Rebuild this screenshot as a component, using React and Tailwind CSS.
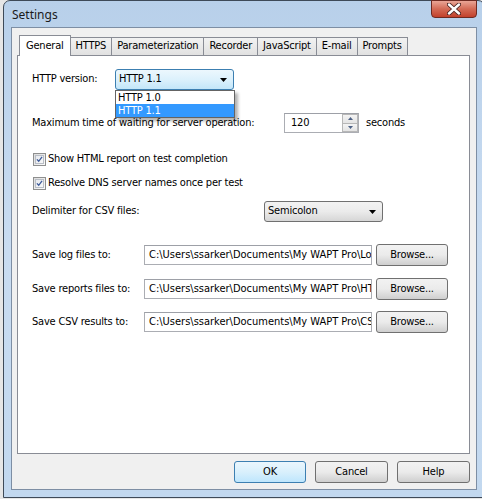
import React from "react";

const F = { fontFamily: '"DejaVu Sans Condensed", "DejaVu Sans", sans-serif' };

function Arrow() {
  return (
    <svg width="7" height="4" viewBox="0 0 7 4" className="block">
      <path d="M0 0 H7 L3.5 4 Z" fill="#000" />
    </svg>
  );
}

function Check() {
  return (
    <div className="w-[13px] h-[13px] border border-[#8e8f8f] bg-gradient-to-br from-[#dcdcdc] to-[#fbfbfb] flex items-center justify-center shrink-0">
      <div className="w-[9px] h-[9px] bg-gradient-to-br from-[#e6e9ee] to-[#f8f8f8] border border-[#b9bec6] flex items-center justify-center">
        <svg width="9" height="9" viewBox="0 0 9 9" className="block">
          <path d="M1.2 4.3 L3.5 6.8 L7.8 1.2" stroke="#3c5a99" strokeWidth="1.7" fill="none" />
        </svg>
      </div>
    </div>
  );
}

function Button({ children, w, def }) {
  return (
    <div
      className={`h-[22px] rounded-[3px] border flex items-center justify-center text-[11px] text-black ${
        def
          ? "border-[#3c7fb1] bg-gradient-to-b from-[#eaf6fd] via-[#d9f0fc] to-[#bee6fd]"
          : "border-[#707070] bg-gradient-to-b from-[#f2f2f2] via-[#ebebeb] to-[#cfcfcf]"
      }`}
      style={{ width: w }}
    >
      {children}
    </div>
  );
}

function PathRow({ label, value, mt }) {
  return (
    <div className={`flex items-center h-[22px] ${mt}`}>
      <span className="w-[112px] shrink-0">{label}</span>
      <div className="w-[228px] h-[20px] border border-[#abadb3] border-t-[#9da0a7] bg-white flex items-center pl-[4px] overflow-hidden whitespace-nowrap tracking-normal">
        {value}
      </div>
      <div className="ml-[4px]">
        <Button w="72px">Browse...</Button>
      </div>
    </div>
  );
}

export default function App() {
  return (
    <div className="w-[482px] h-[499px] overflow-hidden bg-[#e6e6e6] text-[11px] tracking-[-0.2px] text-black" style={F}>
      <div className="ml-[3px] w-[482px] h-[498px] rounded-t-[7px] border border-[#3e4a58] bg-gradient-to-b from-[#b8d0ea] via-[#c9dcf1] to-[#c2d8ef] flex flex-col px-[7px] pb-[7px]">
        {/* title bar */}
        <div className="h-[26px] flex items-start justify-between shrink-0">
          <span className="pt-[5px] pl-[1px] text-[12px] tracking-normal text-[#1a1a1a]" style={{ fontFamily: '"Noto Sans", sans-serif' }}>
            Settings
          </span>
          <div className="w-[46px] h-[18px] -mt-px rounded-b-[4px] border border-[#6e2a21] bg-gradient-to-b from-[#e9a596] via-[#d36a55] to-[#c2402b] flex items-center justify-center">
            <svg width="14" height="12" viewBox="0 0 14 12" className="block">
              <path d="M2 1.5 L12 10.5 M12 1.5 L2 10.5" stroke="#4a2320" strokeWidth="4.2" strokeLinecap="round" />
              <path d="M2 1.5 L12 10.5 M12 1.5 L2 10.5" stroke="#ffffff" strokeWidth="2.4" strokeLinecap="round" />
            </svg>
          </div>
        </div>
        {/* client area */}
        <div className="flex-1 border border-[#7d8ea4] bg-[#f0f0f0] flex flex-col px-[5px]">
          {/* tabs */}
          <div className="flex items-end h-[27px] pl-[2px] shrink-0">
            <div className="h-[21px] px-[6px] bg-white border border-b-0 border-[#898c95] flex items-center -mb-px relative z-10">
              General
            </div>
            {["HTTPS", "Parameterization", "Recorder", "JavaScript", "E-mail", "Prompts"].map((t) => (
              <div
                key={t}
                className="h-[18px] px-[5px] border border-l-0 border-b-0 border-[#898c95] bg-gradient-to-b from-[#f2f2f2] to-[#e1e1e1] flex items-center"
              >
                {t}
              </div>
            ))}
          </div>
          {/* panel */}
          <div className="w-[453px] h-[399px] bg-white border border-[#898c95] flex flex-col pl-[14px]">
            <div className="flex items-center h-[21px] mt-[13px]">
              <span className="w-[83px] shrink-0">HTTP version:</span>
              <div className="relative">
                <div className="w-[119px] h-[21px] rounded-[3px] border border-[#3c7fb1] bg-gradient-to-b from-[#ecf7fd] via-[#dcf1fc] to-[#c3e6f9] flex items-center justify-between pl-[3px] pr-[6px]">
                  <span>HTTP 1.1</span>
                  <Arrow />
                </div>
                <div className="absolute left-0 top-[21px] w-[120px] bg-white border border-[#646464] shadow-[3px_3px_3px_rgba(0,0,0,0.3)] z-20">
                  <div className="h-[13px] leading-[13px] pl-[2px]">HTTP 1.0</div>
                  <div className="h-[13px] leading-[13px] pl-[2px] bg-[#3399ff] text-white">HTTP 1.1</div>
                </div>
              </div>
            </div>

            <div className="flex items-center h-[20px] mt-[23px]">
              <span className="w-[252px] shrink-0">Maximum time of waiting for server operation:</span>
              <div className="w-[75px] h-[20px] border border-[#abadb3] border-t-[#9da0a7] bg-white flex items-center justify-between">
                <span className="pl-[6px]">120</span>
                <div className="w-[16px] h-[18px] flex flex-col">
                  <div className="flex-1 border border-[#b7b7b7] bg-gradient-to-b from-[#f4f4f4] to-[#e4e4e4] flex items-center justify-center">
                    <svg width="5" height="3" viewBox="0 0 5 3" className="block">
                      <path d="M0 3 H5 L2.5 0 Z" fill="#4d6185" />
                    </svg>
                  </div>
                  <div className="flex-1 border border-t-0 border-[#b7b7b7] bg-gradient-to-b from-[#f4f4f4] to-[#e4e4e4] flex items-center justify-center">
                    <svg width="5" height="3" viewBox="0 0 5 3" className="block">
                      <path d="M0 0 H5 L2.5 3 Z" fill="#4d6185" />
                    </svg>
                  </div>
                </div>
              </div>
              <span className="ml-[7px]">seconds</span>
            </div>

            <div className="flex items-center h-[16px] mt-[18px] pl-px gap-[2px]">
              <Check />
              <span>Show HTML report on test completion</span>
            </div>
            <div className="flex items-center h-[16px] mt-[8px] pl-px gap-[2px]">
              <Check />
              <span>Resolve DNS server names once per test</span>
            </div>

            <div className="flex items-center h-[21px] mt-[10px]">
              <span className="w-[232px] shrink-0">Delimiter for CSV files:</span>
              <div className="w-[119px] h-[21px] rounded-[3px] border border-[#707070] bg-gradient-to-b from-[#f2f2f2] via-[#ebebeb] to-[#d6d6d6] flex items-center justify-between pl-[3px] pr-[6px]">
                <span>Semicolon</span>
                <Arrow />
              </div>
            </div>

            <PathRow mt="mt-[22px]" label="Save log files to:" value="C:\Users\ssarker\Documents\My WAPT Pro\Logs" />
            <PathRow mt="mt-[12px]" label="Save reports files to:" value="C:\Users\ssarker\Documents\My WAPT Pro\HTML" />
            <PathRow mt="mt-[11px]" label="Save CSV results to:" value="C:\Users\ssarker\Documents\My WAPT Pro\CSV" />
          </div>
          {/* bottom buttons */}
          <div className="flex justify-end gap-[9px] mt-[7px] pr-px">
            <Button w="72px" def>OK</Button>
            <Button w="73px">Cancel</Button>
            <Button w="73px">Help</Button>
          </div>
        </div>
      </div>
    </div>
  );
}
